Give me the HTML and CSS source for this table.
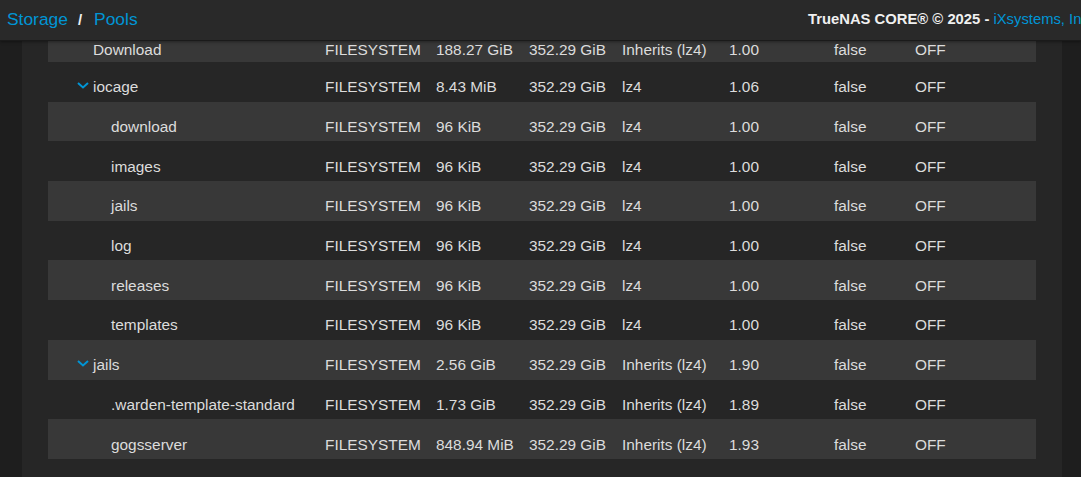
FILE: index.html
```html
<!DOCTYPE html>
<html>
<head>
  <link rel="stylesheet" href="styles.css">
</head>
<body>
  <!-- Top bar with breadcrumb and copyright -->
  <header class="topbar">
    <nav class="crumbs">
      <a class="crumb">Storage</a>
      <span class="crumb-sep">/</span>
      <a class="crumb">Pools</a>
    </nav>
    <div class="copyright">TrueNAS CORE® © 2025 - <a class="vendor">iXsystems, Inc.</a></div>
  </header>

  <main class="page">
    <section class="card">
      <div class="dataset-table">
        <div class="row stripe clipped">
          <div class="name lvl1">Download</div>
          <div>FILESYSTEM</div><div>188.27 GiB</div><div>352.29 GiB</div><div>Inherits (lz4)</div><div>1.00</div><div>false</div><div>OFF</div>
        </div>
        <div class="row">
          <div class="name lvl1 parent"><svg class="chevron" viewBox="0 0 12 7"><polyline points="1,1 6,5.5 11,1"/></svg>iocage</div>
          <div>FILESYSTEM</div><div>8.43 MiB</div><div>352.29 GiB</div><div>lz4</div><div>1.06</div><div>false</div><div>OFF</div>
        </div>
        <div class="row stripe">
          <div class="name lvl2">download</div>
          <div>FILESYSTEM</div><div>96 KiB</div><div>352.29 GiB</div><div>lz4</div><div>1.00</div><div>false</div><div>OFF</div>
        </div>
        <div class="row">
          <div class="name lvl2">images</div>
          <div>FILESYSTEM</div><div>96 KiB</div><div>352.29 GiB</div><div>lz4</div><div>1.00</div><div>false</div><div>OFF</div>
        </div>
        <div class="row stripe">
          <div class="name lvl2">jails</div>
          <div>FILESYSTEM</div><div>96 KiB</div><div>352.29 GiB</div><div>lz4</div><div>1.00</div><div>false</div><div>OFF</div>
        </div>
        <div class="row">
          <div class="name lvl2">log</div>
          <div>FILESYSTEM</div><div>96 KiB</div><div>352.29 GiB</div><div>lz4</div><div>1.00</div><div>false</div><div>OFF</div>
        </div>
        <div class="row stripe">
          <div class="name lvl2">releases</div>
          <div>FILESYSTEM</div><div>96 KiB</div><div>352.29 GiB</div><div>lz4</div><div>1.00</div><div>false</div><div>OFF</div>
        </div>
        <div class="row">
          <div class="name lvl2">templates</div>
          <div>FILESYSTEM</div><div>96 KiB</div><div>352.29 GiB</div><div>lz4</div><div>1.00</div><div>false</div><div>OFF</div>
        </div>
        <div class="row stripe">
          <div class="name lvl1 parent"><svg class="chevron" viewBox="0 0 12 7"><polyline points="1,1 6,5.5 11,1"/></svg>jails</div>
          <div>FILESYSTEM</div><div>2.56 GiB</div><div>352.29 GiB</div><div>Inherits (lz4)</div><div>1.90</div><div>false</div><div>OFF</div>
        </div>
        <div class="row">
          <div class="name lvl2">.warden-template-standard</div>
          <div>FILESYSTEM</div><div>1.73 GiB</div><div>352.29 GiB</div><div>Inherits (lz4)</div><div>1.89</div><div>false</div><div>OFF</div>
        </div>
        <div class="row stripe">
          <div class="name lvl2">gogsserver</div>
          <div>FILESYSTEM</div><div>848.94 MiB</div><div>352.29 GiB</div><div>Inherits (lz4)</div><div>1.93</div><div>false</div><div>OFF</div>
        </div>
      </div>
    </section>
  </main>
</body>
</html>
```

FILE: styles.css
```css
body {
  margin: 0;
  background-color: #1e1e1e;
  font-family: 'Liberation Sans', Arial, sans-serif;
  color: #dcdcdc;
  height: 100vh;
  overflow: hidden;
  display: flex;
  flex-direction: column;
}

/* Top bar */
.topbar {
  height: 40px;
  flex: 0 0 auto;
  background: #292929;
  border-bottom: 1px solid #1a1a1a;
  box-shadow: 0 1px 3px rgba(0, 0, 0, 0.4);
  display: grid;
  grid-template-columns: 808px auto;
  align-items: center;
  overflow: hidden;
  white-space: nowrap;
  position: relative;
  z-index: 2;
}

.crumbs {
  padding-left: 7px;
  display: flex;
  align-items: center;
  font-size: 17.4px;
  padding-bottom: 2px;
}

.crumb {
  color: #0095d5;
}

.crumb-sep {
  color: #f0f0f0;
  margin: 0 12px 0 10px;
  font-weight: bold;
  font-size: 15px;
}

.copyright {
  font-size: 14.8px;
  font-weight: bold;
  color: #f0f0f0;
  padding-bottom: 2px;
}

.vendor {
  color: #0095d5;
  font-weight: normal;
}

/* Content */
.page {
  flex: 1 1 auto;
  padding: 0 19px 0 22px;
  overflow: hidden;
}

.card {
  background: #262626;
  height: 100%;
  padding: 0 26px;
}

.row {
  display: grid;
  grid-template-columns: 277px 111px 93px 93px 107px 105px 81px 1fr;
  height: 39.7px;
  box-sizing: border-box;
  padding-top: 11px;
  align-items: center;
  font-size: 15.4px;
  white-space: nowrap;
}

.row.stripe {
  background: #383838;
}

/* Top row is only partly visible under the bar */
.row.clipped {
  height: 21px;
  padding-top: 0;
  padding-bottom: 5px;
}

.name {
  display: flex;
  align-items: center;
}

.name.lvl1 {
  padding-left: 45px;
}

.name.lvl1.parent {
  padding-left: 29px;
}

.name.lvl2 {
  padding-left: 63px;
}

.chevron {
  width: 12px;
  height: 7px;
  margin-right: 4px;
  margin-top: -3px;
}

.chevron polyline {
  fill: none;
  stroke: #0095d5;
  stroke-width: 2;
}
```
